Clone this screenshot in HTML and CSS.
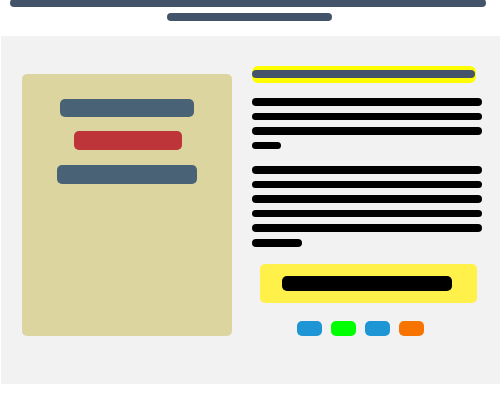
FILE: index.html
```html
<!DOCTYPE html>
<html>
<head>
<meta charset="utf-8">
<link rel="stylesheet" href="styles.css">
</head>
<body>
<header class="header">
  <div class="title-bar"></div>
  <div class="subtitle-bar"></div>
</header>
<section class="main">
  <div class="card">
    <div class="card-bar slate w134"></div>
    <div class="card-bar red w108"></div>
    <div class="card-bar slate w140"></div>
  </div>
  <div class="content">
    <div class="highlight"><div class="heading-bar"></div></div>
    <div class="para">
      <div class="line"></div>
      <div class="line"></div>
      <div class="line"></div>
      <div class="line short1"></div>
    </div>
    <div class="para para2">
      <div class="line"></div>
      <div class="line"></div>
      <div class="line"></div>
      <div class="line"></div>
      <div class="line"></div>
      <div class="line short2"></div>
    </div>
    <div class="cta"><div class="cta-bar"></div></div>
    <div class="chips">
      <div class="chip blue"></div>
      <div class="chip green"></div>
      <div class="chip blue"></div>
      <div class="chip orange"></div>
    </div>
  </div>
</section>
</body>
</html>
```
FILE: styles.css
```css
html, body {
  margin: 0;
  padding: 0;
  background: #ffffff;
  font-family: "Liberation Sans", Arial, sans-serif;
}
.header {
  height: 36px;
  display: flex;
  flex-direction: column;
  align-items: center;
}
.title-bar {
  width: 476px;
  height: 8px;
  margin-top: -1px;
  align-self: flex-start;
  margin-left: 10px;
  background: #43536a;
  border-radius: 4px;
}
.subtitle-bar {
  width: 165px;
  height: 8px;
  margin-top: 6px;
  margin-left: -2px;
  background: #43536a;
  border-radius: 4px;
}
.main {
  margin-left: 1px;
  height: 348px;
  background: #f2f2f2;
  display: flex;
  align-items: flex-start;
  padding-left: 21px;
  gap: 20px;
  box-sizing: border-box;
}
.card {
  width: 210px;
  height: 262px;
  margin-top: 38px;
  background: #dcd5a0;
  border-radius: 5px;
  display: flex;
  flex-direction: column;
  align-items: center;
  padding-top: 25px;
  box-sizing: border-box;
}
.card-bar {
  height: 19px;
  border-radius: 5px;
  margin-bottom: 14px;
}
.card-bar.slate { background: #4a6275; }
.card-bar.red { background: #bd3539; }
.w134 { width: 134px; height: 18px; }
.w108 { width: 108px; margin-left: 2px; margin-bottom: 15px; }
.w140 { width: 140px; }
.content {
  width: 230px;
  margin-top: 30px;
  display: flex;
  flex-direction: column;
}
.highlight {
  width: 224px;
  height: 17px;
  background: #ffff00;
  border-radius: 6px;
  padding-top: 4px;
  box-sizing: border-box;
}
.heading-bar {
  width: 223px;
  height: 8px;
  background: #46546a;
  border-radius: 4px;
}
.para {
  margin-top: 15px;
  display: flex;
  flex-direction: column;
  gap: 6.9px;
}
.para2 {
  margin-top: 16.5px;
}
.line {
  width: 230px;
  height: 7.7px;
  background: #000000;
  border-radius: 4px;
}
.short1 { width: 29px; }
.short2 { width: 50px; }
.cta {
  width: 217px;
  height: 39.4px;
  margin-top: 17.6px;
  margin-left: 8px;
  background: #fff04a;
  border-radius: 5px;
  display: flex;
  align-items: center;
  padding-left: 22px;
  box-sizing: border-box;
}
.cta-bar {
  width: 170px;
  height: 15px;
  background: #000000;
  border-radius: 5px;
}
.chips {
  margin-top: 17.3px;
  margin-left: 45px;
  display: flex;
  gap: 9px;
}
.chip {
  width: 25px;
  height: 15px;
  border-radius: 5px;
}
.chip.blue { background: #1e95d4; }
.chip.green { background: #00ff00; }
.chip.orange { background: #f77400; }
```
